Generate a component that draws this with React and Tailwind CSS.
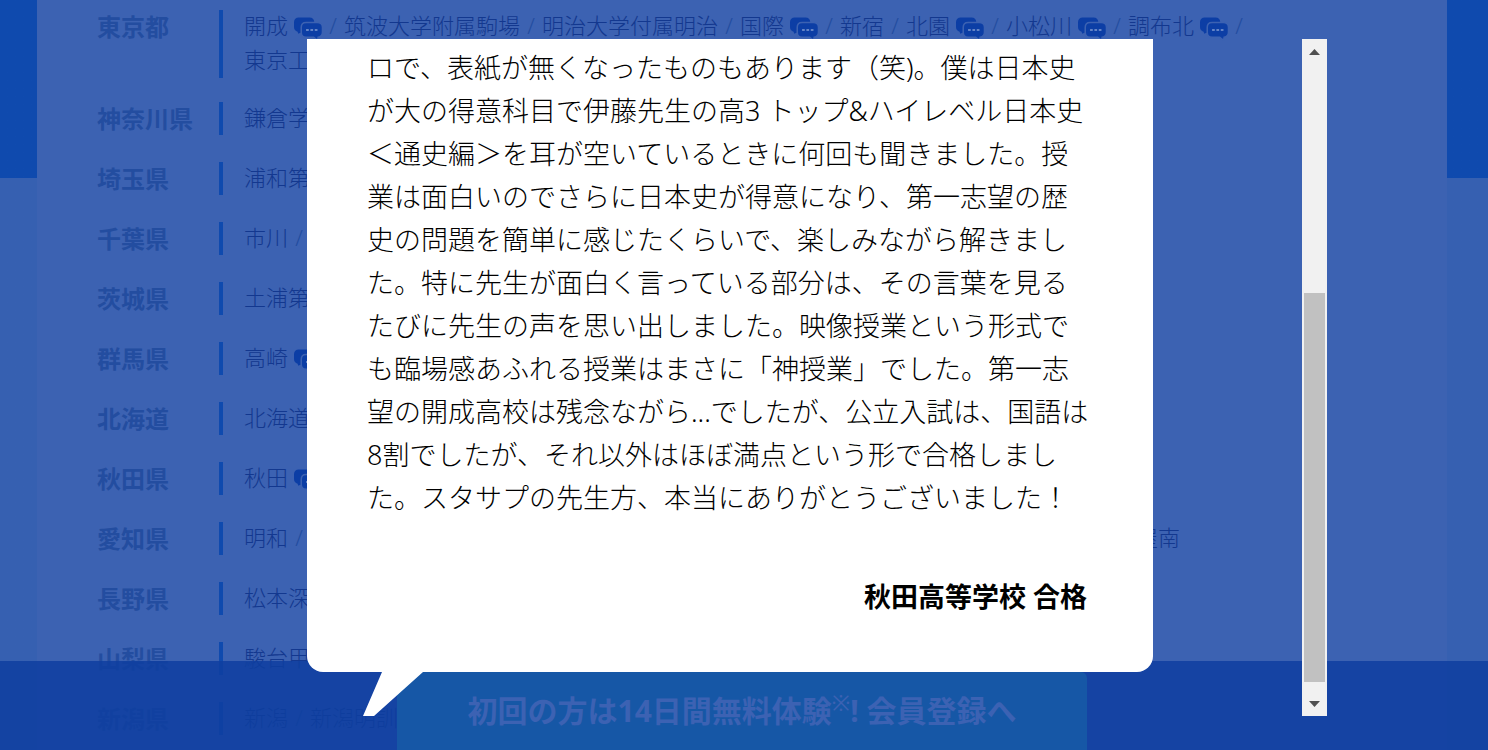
import React from "react";

const prefectures = [
  {
    name: "東京都",
    tall: true,
    lines: [
      [["開成", true], ["筑波大学附属駒場"], ["明治大学付属明治"], ["国際", true], ["新宿"], ["北園", true], ["小松川", true], ["調布北", true], null],
      [["東京工業"]],
    ],
  },
  { name: "神奈川県", lines: [[["鎌倉学園"]]] },
  { name: "埼玉県", lines: [[["浦和第一"]]] },
  { name: "千葉県", lines: [[["市川"], ["船橋"]]] },
  { name: "茨城県", lines: [[["土浦第一"]]] },
  { name: "群馬県", lines: [[["高崎", true]]] },
  { name: "北海道", lines: [[["北海道"]]] },
  { name: "秋田県", lines: [[["秋田", true]]] },
  { name: "愛知県", spread: true, lines: [[["明和"], ["旭丘"], ["名古屋南"]]] },
  { name: "長野県", lines: [[["松本深志"]]] },
  { name: "山梨県", lines: [[["駿台甲府"]]] },
  { name: "新潟県", lines: [[["新潟"], ["新潟明訓"]]] },
];

const story = [
  "ロで、表紙が無くなったものもあります（笑)。僕は日本史",
  "が大の得意科目で伊藤先生の高3 トップ&ハイレベル日本史",
  "＜通史編＞を耳が空いているときに何回も聞きました。授",
  "業は面白いのでさらに日本史が得意になり、第一志望の歴",
  "史の問題を簡単に感じたくらいで、楽しみながら解きまし",
  "た。特に先生が面白く言っている部分は、その言葉を見る",
  "たびに先生の声を思い出しました。映像授業という形式で",
  "も臨場感あふれる授業はまさに「神授業」でした。第一志",
  "望の開成高校は残念ながら...でしたが、公立入試は、国語は",
  "8割でしたが、それ以外はほぼ満点という形で合格しまし",
  "た。スタサプの先生方、本当にありがとうございました！",
];

function VoiceIcon() {
  return (
    <svg viewBox="0 0 29 24" className="mt-[7px] ml-1.5 h-6 w-7 shrink-0" aria-hidden="true">
      <path fill="#0c3ea5" d="M5 0h11c3 0 5 2 5 5v6c0 3-2 5-5 5H6.500l-2 1-.8-2.200C1.500 14 0 12.500 0 10V5c0-3 2-5 5-5Z" />
      <path
        fill="#0c3ea5"
        stroke="#3c62b2"
        strokeWidth="1.600"
        d="M12.500 5.200h11.500c3 0 5.500 2 5.500 5v5c0 3-2 5-4.500 5.300l-.6 3.200-4-3.200h-7.900c-3 0-5-2-5-5v-5.300c0-3 2-5 5-5Z"
      />
      <path fill="#6484c6" d="M12.500 12h2.800v2.200h-2.800zM17 12h2.800v2.200H17zM21.500 12h2.800v2.200h-2.800z" />
    </svg>
  );
}

function Prefecture({ name, tall, spread, lines }) {
  return (
    <li className={tall ? "flex pb-6" : "flex pb-[27px]"}>
      <h3 className="w-[122px] shrink-0 text-2xl leading-[33px] font-bold text-[#234da0]">{name}</h3>
      <div className="min-w-0 grow border-l-4 border-[#0f4aae] pl-[21px]">
        {lines.map((line, i) => (
          <div key={i} className={tall ? "flex h-[34px] items-start" : "flex h-[33px] max-w-[936px] items-start"}>
            {line.map((school, j) => (
              <React.Fragment key={j}>
                {j > 0 && <span className="w-[22px] shrink-0 text-center text-[#234da0]">/</span>}
                {school && (
                  <a
                    href="#voice"
                    className={spread && j === line.length - 1 ? "ml-auto flex shrink-0 items-start" : "flex shrink-0 items-start"}
                  >
                    {school[0]}
                    {school[1] && <VoiceIcon />}
                  </a>
                )}
              </React.Fragment>
            ))}
          </div>
        ))}
      </div>
    </li>
  );
}

export default function App() {
  return (
    <div className="relative h-screen overflow-hidden bg-[#3660b1] font-['Noto_Sans','Noto_Sans_CJK_JP',sans-serif]">
      <div className="h-full bg-linear-to-b from-[#0f4aae] from-[178px] to-[#3660b1] to-[178px] pr-[41px] pl-[37px]">
        <ul className="h-full overflow-hidden bg-[#3c62b2] pt-2.5 pl-[60px] text-[22px] leading-[31px] font-light whitespace-nowrap text-[#13388f]">
          {prefectures.map((p) => (
            <Prefecture key={p.name} {...p} />
          ))}
        </ul>
      </div>

      <div className="fixed inset-x-0 bottom-0 flex h-[89px] justify-center bg-[#0e3ea0]/85 pt-[11px] pr-1">
        <a
          href="#signup"
          className="flex w-[690px] items-center justify-center rounded-t-md bg-[#1657a6] text-[30px] leading-10 font-bold whitespace-nowrap text-[#3c62b3]"
        >
          <span>
            初回の方は14日間無料体験<sup className="text-[22px] leading-none font-normal">※</sup>! 会員登録へ
          </span>
        </a>
      </div>

      <div role="dialog" aria-label="合格者の声" className="fixed inset-x-[161px] top-[39px] bottom-[34px] flex justify-between pl-[146px]">
        <div className="w-[846px]">
          <article className="rounded-b-2xl bg-white px-[60px] pt-[7px] pb-[54px] text-black">
            <p className="text-[27px] leading-[43px] font-light whitespace-nowrap">
              {story.map((line) => (
                <span key={line} className="block">
                  {line}
                </span>
              ))}
            </p>
            <p className="pt-14 pr-[6px] text-right text-[27px] leading-[43px] font-bold">秋田高等学校 合格</p>
          </article>
          <svg viewBox="0 0 60 45" className="-mt-px ml-14 h-[45px] w-[60px]" aria-hidden="true">
            <path fill="#fff" d="M19 0h41v1L11 45H0L19 1Z" />
          </svg>
        </div>
        <div className="flex w-[25px] shrink-0 flex-col items-center bg-[#f1f1f1]">
          <button type="button" aria-label="上へスクロール" className="flex h-[25px] w-full items-center justify-center">
            <svg viewBox="0 0 11 6" className="h-1.5 w-[11px]" aria-hidden="true">
              <path fill="#505050" d="M5.500 0 11 6H0Z" />
            </svg>
          </button>
          <div className="flex w-full grow flex-col justify-end px-0.5 pb-[9px]">
            <div className="h-[63%] bg-[#c1c1c1]" />
          </div>
          <button type="button" aria-label="下へスクロール" className="flex h-[25px] w-full items-center justify-center">
            <svg viewBox="0 0 11 6" className="h-1.5 w-[11px]" aria-hidden="true">
              <path fill="#505050" d="M0 0h11L5.500 6Z" />
            </svg>
          </button>
        </div>
      </div>
    </div>
  );
}
